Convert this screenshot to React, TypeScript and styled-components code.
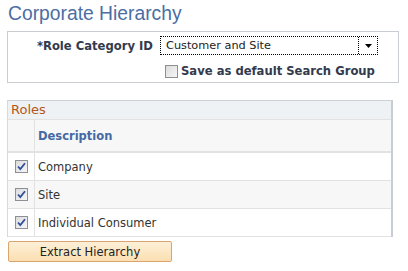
import styled, { createGlobalStyle } from 'styled-components';

const Global = createGlobalStyle`
  body {
    margin: 0;
    background: #ffffff;
    font-family: "DejaVu Sans", Verdana, sans-serif;
  }
`;

const roles = [
  { name: 'Company', checked: true },
  { name: 'Site', checked: true },
  { name: 'Individual Consumer', checked: true },
];

const App = () => {
  return (
    <Page>
      <Global />
      <Title>Corporate Hierarchy</Title>
      <SearchBox>
        <FieldRow>
          <Label>*Role Category ID</Label>
          <Select>
            <SelectText>Customer and Site</SelectText>
            <SelectArrow>
              <svg width='7' height='4' viewBox='0 0 7 4'>
                <path d='M0 0h7L3.5 4z' fill='#000' />
              </svg>
            </SelectArrow>
          </Select>
        </FieldRow>
        <CheckRow>
          <CheckBox checked={false} />
          <CheckLabel>Save as default Search Group</CheckLabel>
        </CheckRow>
      </SearchBox>

      <Grid>
        <GridTitle>Roles</GridTitle>
        <HeaderRow>
          <SelCell />
          <HeadCell>Description</HeadCell>
        </HeaderRow>
        {roles.map((r, i) => (
          <Row key={r.name} alt={i % 2 === 1}>
            <SelCell>
              <CheckBox checked={r.checked} />
            </SelCell>
            <Cell>{r.name}</Cell>
          </Row>
        ))}
      </Grid>

      <Button>Extract Hierarchy</Button>
    </Page>
  );
};

const CheckBox = ({ checked }: { checked: boolean }) => (
  <Box>
    {checked && (
      <svg width='9' height='9' viewBox='0 0 9 9'>
        <path d='M1 4.5l2.3 2.5L8 1.2' stroke='#2f4f9c' strokeWidth='1.8' fill='none' />
      </svg>
    )}
  </Box>
);

const Page = styled.div`
  width: 408px;
  height: 271px;
  padding: 3px 0 0 0;
  box-sizing: border-box;
`;

const Title = styled.div`
  margin-left: 8px;
  font-family: "Liberation Sans", Arial, sans-serif;
  font-size: 19.3px;
  line-height: 22px;
  color: #4b6ea3;
`;

const SearchBox = styled.div`
  margin: 6px 0 0 7px;
  width: 392px;
  height: 52px;
  box-sizing: border-box;
  border: 1px solid #c9cdd2;
  padding-top: 4px;
`;

const FieldRow = styled.div`
  display: flex;
  align-items: center;
  height: 19px;
`;

const Label = styled.div`
  width: 146px;
  text-align: right;
  font-size: 11.6px;
  font-weight: bold;
  color: #333a4d;
  padding-right: 1px;
  box-sizing: border-box;
  margin-right: 6px;
  white-space: nowrap;
`;

const Select = styled.div`
  display: flex;
  width: 218px;
  height: 19px;
  box-sizing: border-box;
  border: 1px dotted #000;
  background: #fff;
`;

const SelectText = styled.div`
  flex: 1;
  font-size: 11.3px;
  line-height: 17px;
  padding-left: 5px;
  color: #222;
  border-right: 1px dotted #000;
`;

const SelectArrow = styled.div`
  width: 18px;
  display: flex;
  align-items: center;
  justify-content: center;
`;

const CheckRow = styled.div`
  display: flex;
  align-items: center;
  margin: 9px 0 0 157px;
  height: 14px;
`;

const Box = styled.span`
  display: inline-flex;
  align-items: center;
  justify-content: center;
  width: 13px;
  height: 13px;
  box-sizing: border-box;
  border: 1px solid #8c8f94;
  background: linear-gradient(135deg, #dcdcdc, #f6f6f6);
`;

const CheckLabel = styled.span`
  margin-left: 3px;
  font-size: 11.6px;
  font-weight: bold;
  color: #333a4d;
  white-space: nowrap;
`;

const Grid = styled.div`
  margin: 17px 0 0 7px;
  width: 386px;
  box-sizing: border-box;
  border-top: 1px solid #cdd1d7;
  border-left: 1px solid #d6d9de;
  border-right: 2px solid #c8ccd4;
`;

const GridTitle = styled.div`
  height: 18px;
  line-height: 18px;
  padding-left: 3px;
  background: #eef2f4;
  color: #b5561a;
  font-size: 13px;
  border-bottom: 1px solid #e2e2e2;
`;

const HeaderRow = styled.div`
  display: flex;
  height: 31px;
  background: #f7f7f7;
  border-bottom: 2px solid #e2e2e2;
`;

const SelCell = styled.div`
  width: 26px;
  flex: none;
  display: flex;
  align-items: center;
  justify-content: center;
  border-right: 1px solid #e2e2e2;
`;

const HeadCell = styled.div`
  display: flex;
  align-items: center;
  padding-left: 3px;
  font-size: 11.5px;
  font-weight: bold;
  color: #4469a3;
`;

const Row = styled.div<{ alt: boolean }>`
  display: flex;
  height: 27px;
  background: ${(p) => (p.alt ? '#f7f7f7' : '#ffffff')};
  border-bottom: 1px solid #e2e2e2;
`;

const Cell = styled.div`
  display: flex;
  align-items: center;
  padding-left: 3px;
  font-size: 11.5px;
  color: #333;
`;

const Button = styled.button`
  display: block;
  margin: 4px 0 0 8px;
  width: 164px;
  height: 21px;
  padding: 0;
  border: 1px solid #d9a56c;
  border-radius: 2px;
  background: linear-gradient(#fdf0d8, #fbdfb1);
  font-family: "DejaVu Sans", Verdana, sans-serif;
  font-size: 11.5px;
  color: #222;
`;

export default App;
